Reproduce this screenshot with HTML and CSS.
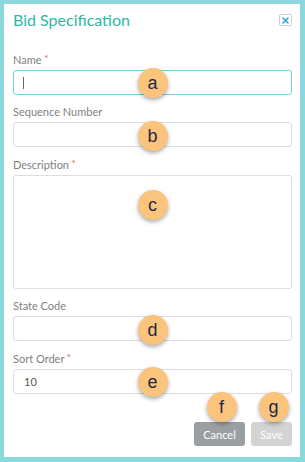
FILE: index.html
```html
<!doctype html>
<html lang="en">
<head>
<meta charset="utf-8">
<title>Bid Specification</title>
<link rel="stylesheet" href="styles.css">
</head>
<body>

<div class="dialog">
  <div class="dialog-header">
    <h1>Bid Specification</h1>
    <button class="close" aria-label="Close">
      <svg width="7" height="7" viewBox="0 0 7 7"><path d="M1 1L6 6M6 1L1 6" stroke="#2aa6e0" stroke-width="1.6" stroke-linecap="round"/></svg>
    </button>
  </div>

  <div class="field">
    <label>Name <span class="req">*</span></label>
    <div class="input focused"><span class="caret"></span></div>
    <span class="badge">a</span>
  </div>

  <div class="field">
    <label>Sequence Number</label>
    <div class="input"></div>
    <span class="badge">b</span>
  </div>

  <div class="field">
    <label>Description <span class="req">*</span></label>
    <div class="input textarea"></div>
    <span class="badge badge-low">c</span>
  </div>

  <div class="field">
    <label>State Code</label>
    <div class="input"></div>
    <span class="badge">d</span>
  </div>

  <div class="field">
    <label>Sort Order <span class="req">*</span></label>
    <div class="input">10</div>
    <span class="badge">e</span>
  </div>

  <div class="actions">
    <button class="btn btn-cancel">Cancel<span class="badge badge-btn">f</span></button>
    <button class="btn btn-save">Save<span class="badge badge-btn">g</span></button>
  </div>
</div>

</body>
</html>
```

FILE: styles.css
```css
* {
  box-sizing: border-box;
}

body {
  background-color: #8bd9de;
  font-family: Lato, "Open Sans", sans-serif;
  margin: 0;
  padding: 4px 5px 5px 4px;
}

.dialog {
  background: white;
  height: 453px;
  padding: 6px 8px 0 9px;
}

.dialog-header {
  display: flex;
  align-items: center;
  justify-content: space-between;
  height: 20px;
  margin-bottom: 21px;
}

h1 {
  font-size: 16px;
  font-weight: 400;
  line-height: 20px;
  color: #2fb7a6;
  margin: 0;
}

.close {
  width: 13px;
  height: 12px;
  padding: 0;
  margin: 0;
  border: 1px solid #cfcfcf;
  border-radius: 2px;
  background: white;
  display: flex;
  align-items: center;
  justify-content: center;
}

.field {
  position: relative;
  margin-bottom: 9px;
}

label {
  display: block;
  font-size: 11px;
  line-height: 15px;
  color: #7f7f7f;
  margin-bottom: 3px;
}

.req {
  color: #e04b4b;
  font-size: 9px;
  vertical-align: 2px;
}

.input {
  position: relative;
  height: 25px;
  border: 1px solid #dedede;
  border-radius: 3px;
  font-size: 11px;
  line-height: 23px;
  color: #555;
  padding-left: 10px;
}

.input.focused {
  border-color: #7ccfd9;
}

.textarea {
  height: 114px;
}

.caret {
  position: absolute;
  left: 9px;
  top: 6px;
  width: 1px;
  height: 12px;
  background: #666;
}

.badge {
  position: absolute;
  left: 50%;
  top: 17px;
  margin-left: -15px;
  width: 30px;
  height: 30px;
  border-radius: 50%;
  background: #fbc47c;
  box-shadow: 0 2px 4px rgba(0, 0, 0, 0.35);
  color: #1e2a48;
  font-family: "Liberation Sans", Arial, sans-serif;
  font-size: 18px;
  line-height: 30px;
  text-align: center;
}

.badge-low {
  top: 34px;
}

.actions {
  display: flex;
  justify-content: flex-end;
  gap: 6px;
  margin-top: 28px;
}

.btn {
  position: relative;
  height: 24px;
  border: none;
  border-radius: 3px;
  font-family: inherit;
  font-size: 11px;
  color: white;
  padding: 0;
}

.btn-cancel {
  width: 51px;
  background: #9a9fa3;
}

.btn-save {
  width: 41px;
  background: #d3d3d3;
}

.badge-btn {
  top: -30px;
  margin-left: -13px;
}
```
